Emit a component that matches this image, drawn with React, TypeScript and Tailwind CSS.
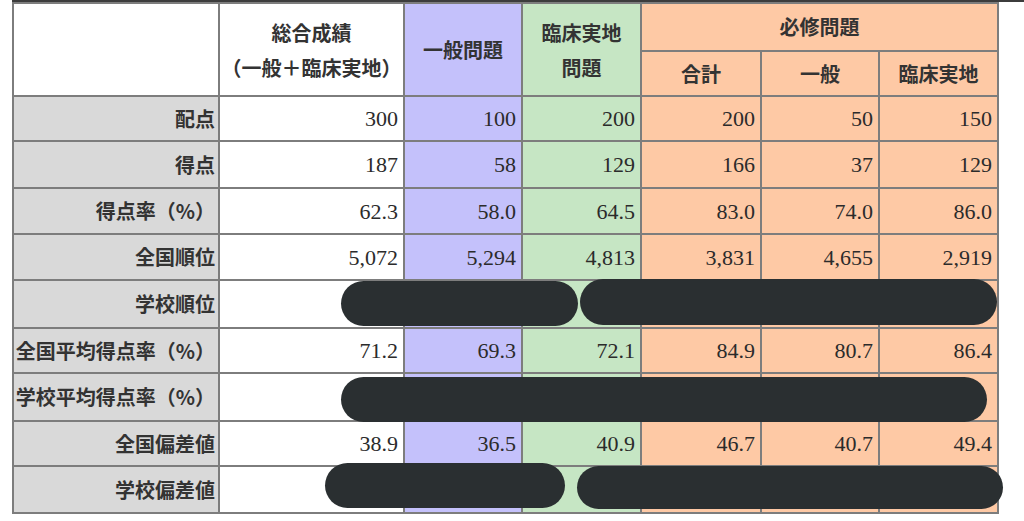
import React from "react";

const jp = { fontFamily: '"Noto Sans CJK JP", "Noto Sans", sans-serif' };
const serif = { fontFamily: '"Liberation Serif", "Noto Sans CJK JP", serif' };

type Row = { label: string; values: string[]; h: string };

const rows: Row[] = [
  { label: "配点", values: ["300", "100", "200", "200", "50", "150"], h: "h-[45px]" },
  { label: "得点", values: ["187", "58", "129", "166", "37", "129"], h: "h-[47px]" },
  { label: "得点率（%）", values: ["62.3", "58.0", "64.5", "83.0", "74.0", "86.0"], h: "h-[46px]" },
  { label: "全国順位", values: ["5,072", "5,294", "4,813", "3,831", "4,655", "2,919"], h: "h-[46px]" },
  { label: "学校順位", values: ["", "", "", "", "", ""], h: "h-[48px]" },
  { label: "全国平均得点率（%）", values: ["71.2", "69.3", "72.1", "84.9", "80.7", "86.4"], h: "h-[45px]" },
  { label: "学校平均得点率（%）", values: ["", "", "", "", "", ""], h: "h-[48px]" },
  { label: "全国偏差値", values: ["38.9", "36.5", "40.9", "46.7", "40.7", "49.4"], h: "h-[45px]" },
  { label: "学校偏差値", values: ["", "", "", "", "", ""], h: "h-[47px]" },
];

// background per value column
const colBg = [
  "bg-white",
  "bg-[#c4c1fb]",
  "bg-[#c6e6c4]",
  "bg-[#fec9a5]",
  "bg-[#fec9a5]",
  "bg-[#fec9a5]",
];

const cell = "border-2 border-[#7d7d7d]";

export default function App() {
  return (
    <div className="relative w-[1024px] h-[521px] bg-white overflow-hidden">
      {/* dark line along the top edge */}
      <div className="ml-[12px] h-[2px] bg-[#3c3c3c]" />

      <table className="ml-[12px] w-[985px] table-fixed border-collapse border-2 border-[#8c8c8c]">
        <colgroup>
          <col className="w-[206px]" />
          <col className="w-[185px]" />
          <col className="w-[118px]" />
          <col className="w-[119px]" />
          <col className="w-[120px]" />
          <col className="w-[118px]" />
          <col className="w-[119px]" />
        </colgroup>
        <thead>
          <tr className="h-[48px]">
            <th rowSpan={2} className={`${cell} bg-white`} />
            <th
              rowSpan={2}
              className={`${cell} bg-white text-[20px] leading-[35px] font-bold text-[#333]`}
              style={jp}
            >
              総合成績
              <br />
              <span className="font-semibold">（一般＋臨床実地）</span>
            </th>
            <th
              rowSpan={2}
              className={`${cell} bg-[#c4c1fb] text-[20px] font-bold text-[#333]`}
              style={jp}
            >
              一般問題
            </th>
            <th
              rowSpan={2}
              className={`${cell} bg-[#c6e6c4] text-[20px] leading-[35px] font-bold text-[#333]`}
              style={jp}
            >
              臨床実地
              <br />
              問題
            </th>
            <th
              colSpan={3}
              className={`${cell} bg-[#fec9a5] text-[20px] font-bold text-[#333]`}
              style={jp}
            >
              必修問題
            </th>
          </tr>
          <tr className="h-[45px]">
            {["合計", "一般", "臨床実地"].map((t) => (
              <th
                key={t}
                className={`${cell} bg-[#fec9a5] text-[20px] font-bold text-[#333]`}
                style={jp}
              >
                {t}
              </th>
            ))}
          </tr>
        </thead>
        <tbody>
          {rows.map((r) => (
            <tr key={r.label} className={r.h}>
              <td
                className={`${cell} bg-[#d9d9d9] text-right pr-[3px] text-[20px] font-bold text-[#333] whitespace-nowrap`}
                style={jp}
              >
                {r.label}
              </td>
              {r.values.map((v, i) => (
                <td
                  key={i}
                  className={`${cell} ${colBg[i]} text-right pr-[5px] text-[22px] text-[#2b2b2b]`}
                  style={serif}
                >
                  {v}
                </td>
              ))}
            </tr>
          ))}
        </tbody>
      </table>

      {/* redaction marks */}
      <div className="absolute left-[341px] top-[281px] w-[237px] h-[45px] rounded-full bg-[#2a2f31]" />
      <div className="absolute left-[580px] top-[279px] w-[417px] h-[46px] rounded-full bg-[#2a2f31]" />
      <div className="absolute left-[341px] top-[377px] w-[646px] h-[45px] rounded-full bg-[#2a2f31]" />
      <div className="absolute left-[325px] top-[463px] w-[240px] h-[45px] rounded-full bg-[#2a2f31]" />
      <div className="absolute left-[577px] top-[466px] w-[426px] h-[43px] rounded-full bg-[#2a2f31]" />
    </div>
  );
}
